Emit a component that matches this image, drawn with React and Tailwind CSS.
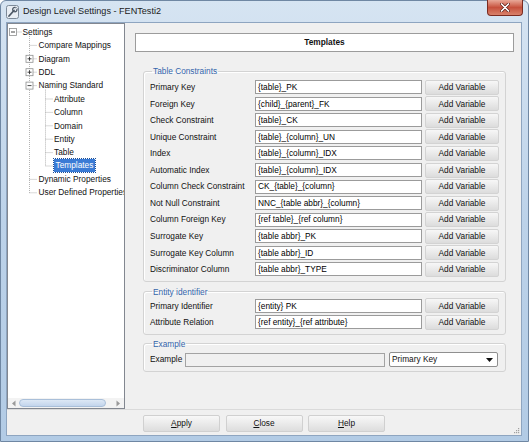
const FONT = "font-['Liberation_Sans',Arial,sans-serif]";

const TABLE_ROWS = [
  ['Primary Key', '{table}_PK'],
  ['Foreign Key', '{child}_{parent}_FK'],
  ['Check Constraint', '{table}_CK'],
  ['Unique Constraint', '{table}_{column}_UN'],
  ['Index', '{table}_{column}_IDX'],
  ['Automatic Index', '{table}_{column}_IDX'],
  ['Column Check Constraint', 'CK_{table}_{column}'],
  ['Not Null Constraint', 'NNC_{table abbr}_{column}'],
  ['Column Foreign Key', '{ref table}_{ref column}'],
  ['Surrogate Key', '{table abbr}_PK'],
  ['Surrogate Key Column', '{table abbr}_ID'],
  ['Discriminator Column', '{table abbr}_TYPE'],
];

const ENTITY_ROWS = [
  ['Primary Identifier', '{entity} PK'],
  ['Attribute Relation', '{ref entity}_{ref attribute}'],
];

const TREE = [
  { label: 'Settings', level: 0 },
  { label: 'Compare Mappings', level: 1 },
  { label: 'Diagram', level: 1 },
  { label: 'DDL', level: 1 },
  { label: 'Naming Standard', level: 1 },
  { label: 'Attribute', level: 2 },
  { label: 'Column', level: 2 },
  { label: 'Domain', level: 2 },
  { label: 'Entity', level: 2 },
  { label: 'Table', level: 2 },
  { label: 'Templates', level: 2, selected: true },
  { label: 'Dynamic Properties', level: 1 },
  { label: 'User Defined Properties', level: 1 },
];

const ROW_H = 13.4;
const rowY = (i) => 1.3 + ROW_H * i + ROW_H / 2;

function Expander({ cx, cy, open }) {
  return (
    <g>
      <rect x={cx - 3.5} y={cy - 3.5} width="7" height="7" fill="#fff" stroke="#8e8f8f" strokeWidth="0.8" />
      <line x1={cx - 2} y1={cy} x2={cx + 2} y2={cy} stroke="#333" strokeWidth="0.9" />
      {!open && <line x1={cx} y1={cy - 2} x2={cx} y2={cy + 2} stroke="#333" strokeWidth="0.9" />}
    </g>
  );
}

function TreeLines() {
  const dot = { stroke: '#a0a0a0', strokeWidth: 0.8, strokeDasharray: '1 1' };
  const level1 = [1, 2, 3, 4, 11, 12];
  const level2 = [5, 6, 7, 8, 9, 10];
  return (
    <svg className="absolute inset-0 pointer-events-none" width="116" height="380">
      <line x1="8.5" y1={rowY(0)} x2="13.5" y2={rowY(0)} {...dot} />
      <line x1="21.5" y1={rowY(0) + 4} x2="21.5" y2={rowY(12)} {...dot} />
      {level1.map((i) => (
        <line key={i} x1="21.5" y1={rowY(i)} x2="29.5" y2={rowY(i)} {...dot} />
      ))}
      <line x1="37.5" y1={rowY(4) + 4} x2="37.5" y2={rowY(10)} {...dot} />
      {level2.map((i) => (
        <line key={i} x1="37.5" y1={rowY(i)} x2="45.5" y2={rowY(i)} {...dot} />
      ))}
      <Expander cx={5} cy={rowY(0)} open />
      <Expander cx={21.5} cy={rowY(2)} />
      <Expander cx={21.5} cy={rowY(3)} />
      <Expander cx={21.5} cy={rowY(4)} open />
    </svg>
  );
}

function TreePanel() {
  const pad = ['pl-[14.5px]', 'pl-[30.5px]', 'pl-[46px]'];
  return (
    <div className="w-[118px] bg-white border border-[#828790] flex flex-col">
      <div className="relative flex-1 overflow-hidden pt-[1.3px]">
        <TreeLines />
        {TREE.map((n) => (
          <div key={n.label} className={`relative h-[13.4px] flex items-center whitespace-nowrap ${pad[n.level]}`}>
            {n.selected ? (
              <span className="bg-[#3a7bd5] text-white px-[1.5px] h-[13px] leading-[13px] outline outline-1 outline-dotted outline-[#1c4e95]">
                {n.label}
              </span>
            ) : (
              <span className="text-[#111]">{n.label}</span>
            )}
          </div>
        ))}
      </div>
      <div className="h-[10px] flex items-center bg-[#f3f3f3] px-[3px] gap-[2px]">
        <svg width="6" height="7" viewBox="0 0 6 7"><path d="M4.5 0.5 L1 3.5 L4.5 6.5 Z" fill="#9a9a9a" /></svg>
        <div className="w-[87px] h-[8px] rounded-[4px] border border-[#a9bfd9] bg-gradient-to-b from-[#dde8f5] to-[#c3d5ec]" />
        <div className="flex-1" />
        <svg width="6" height="7" viewBox="0 0 6 7"><path d="M1.5 0.5 L5 3.5 L1.5 6.5 Z" fill="#9a9a9a" /></svg>
      </div>
    </div>
  );
}

function Field({ children, className = '' }) {
  return (
    <div className={`h-[14px] bg-white border border-[#9b9b9b] flex items-center px-[2px] whitespace-nowrap overflow-hidden ${className}`}>
      {children}
    </div>
  );
}

function AddButton() {
  return (
    <button className="w-[74px] h-[15px] ml-[3px] rounded-[2px] border border-[#d3d3d3] bg-gradient-to-b from-[#f7f7f7] to-[#dcdcdc] text-[#111] leading-none">
      Add Variable
    </button>
  );
}

function Group({ title, className = '', children }) {
  return (
    <fieldset className={`border border-[#d3d3d3] rounded-[3px] shadow-[inset_1px_1px_0_#fff] px-[6px] ${className}`}>
      <legend className="ml-[2px] px-[1px] leading-[10px] text-[#3465ab]">{title}</legend>
      {children}
    </fieldset>
  );
}

function TemplateRow({ label, value }) {
  return (
    <div className="flex items-center h-[16.55px]">
      <span className="w-[105px] text-[#111] whitespace-nowrap">{label}</span>
      <Field className="w-[167px]">{value}</Field>
      <AddButton />
    </div>
  );
}

function DialogButton({ mnemonic, rest }) {
  return (
    <button className="w-[77px] h-[17px] rounded-[2px] border border-[#d0d0d0] bg-gradient-to-b from-[#f8f8f8] to-[#dddddd] text-[#111] leading-none">
      <span className="underline">{mnemonic}</span>
      {rest}
    </button>
  );
}

function TitleIcon() {
  return (
    <svg width="13" height="14" viewBox="0 0 13 14">
      <rect x="0.5" y="0.5" width="12" height="13" rx="2" fill="#e9eef4" stroke="#7d8a99" />
      <path d="M3 11 L8 5.5" stroke="#4d5866" strokeWidth="1.8" strokeLinecap="round" />
      <circle cx="8.8" cy="4.6" r="2.2" fill="none" stroke="#4d5866" strokeWidth="1.2" />
      <path d="M9.6 2.6 L10.8 3.8" stroke="#e9eef4" strokeWidth="1.2" />
    </svg>
  );
}

export default function App() {
  return (
    <div className={`${FONT} text-[8.3px] w-[529px] h-[442px] rounded-t-[6px] border border-[#6f87a3] bg-gradient-to-b from-[#d6e4f2] via-[#bcd2e9] to-[#b2cbe5] flex flex-col relative`}>
      {/* Title bar */}
      <div className="h-[21px] flex items-center pl-[5px] gap-[4px] relative">
        <TitleIcon />
        <span className="text-[9.1px] text-[#1b1b1b]">Design Level Settings - FENTesti2</span>
        <div className="absolute right-[5px] top-[-1px] w-[36px] h-[16px] rounded-b-[4px] border border-t-0 border-[#7b2b20] bg-gradient-to-b from-[#e8a898] via-[#c6503c] to-[#d8816b] flex items-center justify-center">
          <svg width="10" height="9" viewBox="0 0 10 9">
            <path d="M1.5 1 L8.5 8 M8.5 1 L1.5 8" stroke="#5a1c14" strokeWidth="3" strokeLinecap="round" />
            <path d="M1.5 1 L8.5 8 M8.5 1 L1.5 8" stroke="#fff" strokeWidth="1.7" strokeLinecap="round" />
          </svg>
        </div>
      </div>

      {/* Content */}
      <div className="flex-1 ml-[5px] mr-[6px] mb-[5px] bg-[#f0f0f0] border border-[#8ea5c0] flex flex-col relative">
        <div className="flex flex-1">
          <TreePanel />
          <div className="flex-1 pl-[10px] pr-[7px] pt-[10px]">
            <div className="h-[19px] bg-white border border-[#9c9c9c] flex items-center justify-center font-bold text-[#111]">
              Templates
            </div>
            <div className="px-[8px] mt-[14px]">
              <Group title="Table Constraints" className="pt-[3px] pb-[3px]">
                {TABLE_ROWS.map(([l, v]) => <TemplateRow key={l} label={l} value={v} />)}
              </Group>
              <Group title="Entity identifier" className="mt-[5px] pt-[1px] pb-[3px]">
                {ENTITY_ROWS.map(([l, v]) => <TemplateRow key={l} label={l} value={v} />)}
              </Group>
              <Group title="Example" className="mt-[4px] pt-[3px] pb-[3px]">
                <div className="flex items-center h-[16px]">
                  <span className="w-[35px] text-[#111]">Example</span>
                  <div className="w-[200px] h-[14px] bg-[#f0f0f0] border border-[#a3a3a3]" />
                  <div className="w-[109px] h-[15px] ml-[4px] bg-white border border-[#8f8f8f] rounded-[2px] flex items-center justify-between pl-[2px] pr-[4px]">
                    <span className="text-[#111]">Primary Key</span>
                    <svg width="7" height="4" viewBox="0 0 7 4"><path d="M0 0 H7 L3.5 4 Z" fill="#111" /></svg>
                  </div>
                </div>
              </Group>
            </div>
          </div>
        </div>

        {/* Bottom buttons */}
        <div className="h-[26px] border-t border-[#dadada] flex items-start pt-[5px] pl-[136px] gap-[5.5px]">
          <DialogButton mnemonic="A" rest="pply" />
          <DialogButton mnemonic="C" rest="lose" />
          <DialogButton mnemonic="H" rest="elp" />
        </div>

        {/* Resize grip */}
        <svg className="absolute right-[1px] bottom-[1px]" width="8" height="8" viewBox="0 0 8 8">
          {[[6, 2], [6, 4], [4, 4], [6, 6], [4, 6], [2, 6]].map(([x, y]) => (
            <rect key={`${x}-${y}`} x={x} y={y} width="1.2" height="1.2" fill="#a0a0a0" />
          ))}
        </svg>
      </div>
    </div>
  );
}
